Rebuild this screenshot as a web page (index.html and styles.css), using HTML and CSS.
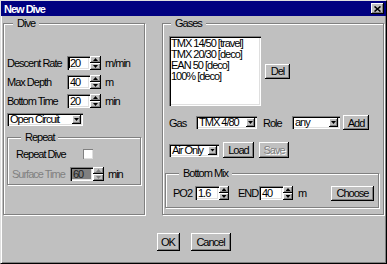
FILE: index.html
```html
<!DOCTYPE html>
<html lang="en">

<head>
    <meta charset="utf-8" />
    <title>New Dive</title>
    <link rel="stylesheet" href="styles.css">
</head>

<body>

    <div class="window">
        <div class="titlebar">
            <span class="title">New Dive</span>
            <span class="close">
                <svg width="7" height="6" viewBox="0 0 7 6">
                    <path d="M0.5 0.5 L6.5 5.5 M6.5 0.5 L0.5 5.5" stroke="#000" stroke-width="1.6" />
                </svg>
            </span>
        </div>

        <div class="panels">
            <fieldset class="group dive">
                <legend>Dive</legend>

                <div class="row">
                    <span class="label">Descent Rate</span>
                    <span class="input"><i class="caret"></i>20</span>
                    <span class="spinner"><i class="up"></i><i class="down"></i></span>
                    <span class="unit">m/min</span>
                </div>

                <div class="row">
                    <span class="label">Max Depth</span>
                    <span class="input">40</span>
                    <span class="spinner"><i class="up"></i><i class="down"></i></span>
                    <span class="unit">m</span>
                </div>

                <div class="row">
                    <span class="label">Bottom Time</span>
                    <span class="input">20</span>
                    <span class="spinner"><i class="up"></i><i class="down"></i></span>
                    <span class="unit">min</span>
                </div>

                <div class="combo combo-mode">
                    <span class="value">Open Circuit</span>
                    <span class="drop"></span>
                </div>

                <fieldset class="group repeat">
                    <legend>Repeat</legend>

                    <div class="row">
                        <span class="label label-check">Repeat Dive</span>
                        <span class="checkbox"></span>
                    </div>

                    <div class="row row-surface disabled">
                        <span class="label label-surface">Surface Time</span>
                        <span class="input">60</span>
                        <span class="spinner"><i class="up"></i><i class="down"></i></span>
                        <span class="unit">min</span>
                    </div>
                </fieldset>
            </fieldset>

            <fieldset class="group gases">
                <legend>Gases</legend>

                <div class="list-row">
                    <ul class="listbox">
                        <li>TMX 14/50 [travel]</li>
                        <li>TMX 20/30 [deco]</li>
                        <li>EAN 50 [deco]</li>
                        <li>100% [deco]</li>
                    </ul>
                    <button class="btn btn-del">Del</button>
                </div>

                <div class="gas-row">
                    <span class="label label-gas">Gas</span>
                    <div class="combo combo-gas">
                        <span class="value">TMX 4/80</span>
                        <span class="drop"></span>
                    </div>
                    <span class="label label-role">Role</span>
                    <div class="combo combo-role">
                        <span class="value">any</span>
                        <span class="drop"></span>
                    </div>
                    <button class="btn btn-add">Add</button>
                </div>

                <div class="load-row">
                    <div class="combo combo-air">
                        <span class="value">Air Only</span>
                        <span class="drop"></span>
                    </div>
                    <button class="btn btn-load">Load</button>
                    <button class="btn btn-save" disabled>Save</button>
                </div>

                <fieldset class="group bottom-mix">
                    <legend>Bottom Mix</legend>

                    <div class="mix-row">
                        <span class="label label-po2">PO2</span>
                        <span class="input input-mix">1.6</span>
                        <span class="spinner spinner-mix"><i class="up"></i><i class="down"></i></span>
                        <span class="label label-end">END</span>
                        <span class="input input-mix">40</span>
                        <span class="spinner spinner-mix"><i class="up"></i><i class="down"></i></span>
                        <span class="unit unit-m">m</span>
                        <button class="btn btn-choose">Choose</button>
                    </div>
                </fieldset>
            </fieldset>
        </div>

        <div class="buttons">
            <button class="btn btn-ok">OK</button>
            <button class="btn btn-cancel">Cancel</button>
        </div>
    </div>

</body>

</html>
```

FILE: styles.css
```css
* {
    box-sizing: border-box;
}

body {
    margin: 0;
    font-family: "Liberation Sans", Arial, sans-serif;
    font-size: 11px;
    letter-spacing: -1px;
    color: #000;
    background: #c0c0c0;
}

.window {
    width: 387px;
    height: 264px;
    background: #c0c0c0;
    border: 1px solid;
    border-color: #dfdfdf #000 #000 #dfdfdf;
    box-shadow: inset 1px 1px #fff, inset -1px -1px #808080;
}

.titlebar {
    height: 15px;
    padding: 0 2px 0 3px;
    display: flex;
    align-items: center;
    justify-content: space-between;
    background: #000080;
    color: #fff;
    font-weight: bold;
}

.close {
    width: 13px;
    height: 11px;
    display: flex;
    align-items: center;
    justify-content: center;
    background: #c0c0c0;
    box-shadow: inset -1px -1px #000, inset 1px 1px #fff, inset -2px -2px #808080;
}

.panels {
    display: flex;
    gap: 17px;
    height: 198px;
    margin: 1px 0 0 2px;
}

/* group boxes */

.group {
    margin: 0;
    min-width: 0;
    border: 1px solid #808080;
    box-shadow: inset 1px 1px #fff, 1px 1px #fff;
}

.group legend {
    padding: 0 4px;
    line-height: 13px;
    background: #c0c0c0;
}

.dive {
    width: 142px;
    padding: 26px 3px 0 3px;
}

.dive > legend {
    margin-left: 6px;
}

.gases {
    width: 222px;
    padding: 6px 4px 0 6px;
}

.gases > legend {
    margin-left: 2px;
}

.repeat {
    margin-top: 5px;
    padding: 3px 4px 3px 4px;
}

.repeat legend {
    margin-left: 9px;
}

.bottom-mix {
    margin: 9px 0 0 -4px;
    width: 214px;
    padding: 5px 4px 6px 7px;
}

.bottom-mix legend {
    margin-left: 6px;
}

/* rows */

.row {
    display: flex;
    align-items: center;
    height: 14px;
    margin-bottom: 5px;
    white-space: nowrap;
}

.label {
    width: 60px;
    white-space: nowrap;
}

.label-check {
    width: 67px;
    margin-left: 4px;
}

.label-surface {
    width: 58px;
}

.row-surface {
    margin: 6px 0 0;
}

.unit {
    margin-left: 4px;
}

.disabled .label {
    color: #808080;
}

/* text field with spin buttons */

.input {
    position: relative;
    width: 23px;
    height: 14px;
    padding-left: 3px;
    line-height: 14px;
    background: #fff;
    box-shadow: inset 1px 1px #808080, inset 2px 2px #000, inset -1px -1px #fff, inset -2px -2px #dfdfdf;
}

.disabled .input {
    background: #808080;
    color: #202020;
}

.caret {
    position: absolute;
    left: 2px;
    top: 2px;
    width: 1px;
    height: 10px;
    background: #000;
}

.spinner {
    width: 11px;
    height: 14px;
    display: flex;
    flex-direction: column;
}

.spinner i {
    flex: 1;
    display: flex;
    align-items: center;
    justify-content: center;
    background: #c0c0c0;
    box-shadow: inset -1px -1px #000, inset 1px 1px #fff, inset -2px -2px #808080;
}

.spinner i::after {
    content: "";
    width: 5px;
    height: 3px;
    background: #000;
}

.spinner .up::after {
    clip-path: polygon(50% 0, 100% 100%, 0 100%);
}

.spinner .down::after {
    clip-path: polygon(0 0, 100% 0, 50% 100%);
}

.disabled .spinner i::after {
    background: #808080;
}

.input-mix {
    width: 24px;
}

.spinner-mix {
    width: 10px;
}

/* combo box */

.combo {
    display: flex;
    height: 13px;
    padding: 2px;
    background: #fff;
    box-shadow: inset 1px 1px #808080, inset 2px 2px #000, inset -1px -1px #fff, inset -2px -2px #dfdfdf;
}

.combo .value {
    flex: 1;
    padding-left: 1px;
    line-height: 9px;
    white-space: nowrap;
}

.combo .drop {
    width: 9px;
    display: flex;
    align-items: center;
    justify-content: center;
    background: #c0c0c0;
    box-shadow: inset -1px -1px #000, inset 1px 1px #fff, inset -2px -2px #808080;
}

.combo .drop::after {
    content: "";
    width: 5px;
    height: 3px;
    background: #000;
    clip-path: polygon(0 0, 100% 0, 50% 100%);
}

.combo-mode {
    width: 76px;
    margin-top: 1px;
}

.combo-gas {
    width: 61px;
}

.combo-role {
    width: 48px;
}

.combo-air {
    width: 50px;
}

/* check box */

.checkbox {
    width: 10px;
    height: 10px;
    background: #fff;
    box-shadow: inset 1px 1px #808080, inset -1px -1px #dfdfdf;
}

/* buttons */

.btn {
    height: 15px;
    padding: 0;
    border: 0;
    font: inherit;
    letter-spacing: -1px;
    color: #000;
    background: #c0c0c0;
    box-shadow: inset -1px -1px #000, inset 1px 1px #fff, inset -2px -2px #808080;
}

.btn:disabled {
    color: #808080;
    text-shadow: 1px 1px #fff;
}

/* gases box */

.list-row {
    display: flex;
    align-items: center;
}

.listbox {
    width: 92px;
    height: 70px;
    margin: 0;
    padding: 2px 2px 0;
    list-style: none;
    line-height: 11px;
    background: #fff;
    box-shadow: inset 1px 1px #808080, inset 2px 2px #000, inset -1px -1px #fff, inset -2px -2px #dfdfdf;
}

.btn-del {
    width: 25px;
    margin-left: 4px;
}

.gas-row {
    display: flex;
    align-items: center;
    height: 15px;
    margin-top: 9px;
}

.label-gas {
    width: 27px;
}

.label-role {
    width: 29px;
    margin-left: 6px;
}

.btn-add {
    width: 26px;
    margin-left: 3px;
}

.load-row {
    display: flex;
    align-items: center;
    height: 16px;
    margin-top: 12px;
}

.btn-load {
    width: 31px;
    height: 16px;
    margin-left: 4px;
}

.btn-save {
    width: 30px;
    height: 16px;
    margin-left: 5px;
}

.mix-row {
    display: flex;
    align-items: center;
    height: 16px;
}

.label-po2 {
    width: 22px;
}

.label-end {
    width: 21px;
    margin-left: 9px;
}

.unit-m {
    margin-left: 5px;
}

.btn-choose {
    width: 43px;
    margin-left: auto;
}

/* dialog buttons */

.buttons {
    display: flex;
    justify-content: center;
    gap: 11px;
    margin-top: 18px;
}

.buttons .btn {
    height: 18px;
}

.btn-ok {
    width: 23px;
}

.btn-cancel {
    width: 40px;
}
```
